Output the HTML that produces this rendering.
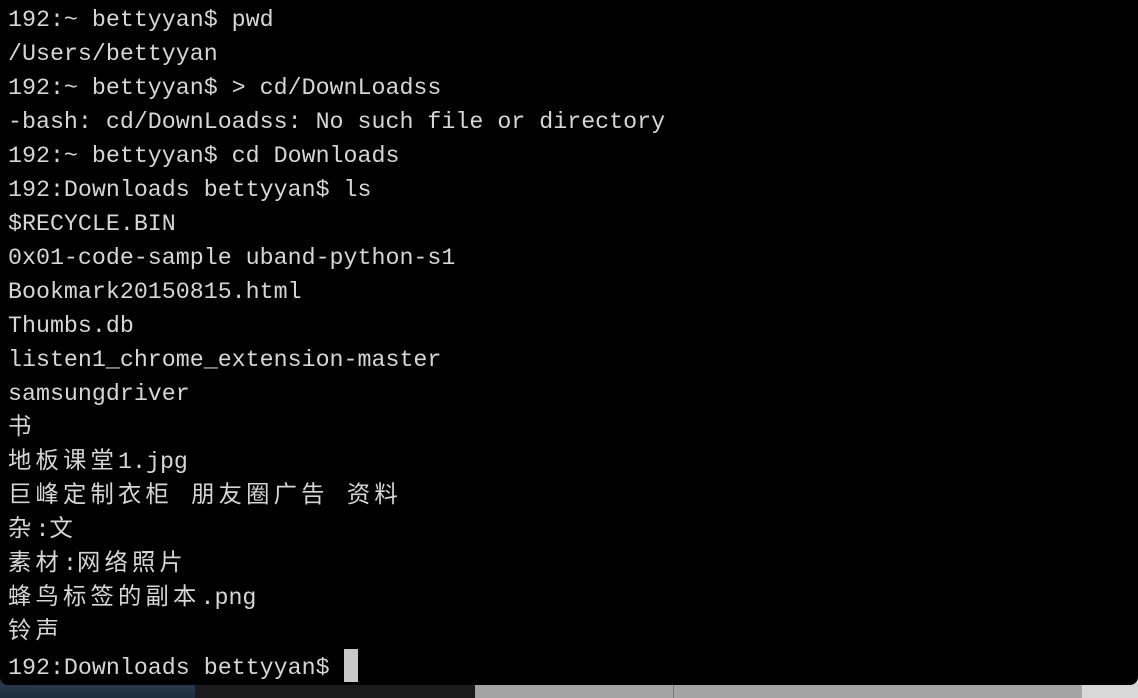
<!DOCTYPE html>
<html><head><meta charset="utf-8"><style>
html,body{margin:0;padding:0;width:1138px;height:698px;overflow:hidden;background:#9a9a9a;}
.bg{position:absolute;left:0;top:660px;height:38px;}
.win{position:absolute;left:0;top:0;width:1138px;height:685px;background:#000;border-radius:0 0 8px 8px;}
pre{margin:0;padding:3px 0 0 8px;font-family:"Liberation Mono","Noto Sans CJK SC",monospace;font-size:23.3px;line-height:34px;color:#d6d6d6;}
.c{letter-spacing:4.2px;}
.cur{display:inline-block;width:14px;height:33px;background:#c8c8c8;vertical-align:-8px;}
</style></head><body>
<div class="bg" style="width:195px;background:linear-gradient(#3a4a60,#1f2d40);"></div>
<div class="bg" style="left:195px;width:280px;background:#1b1b1b;"></div>
<div class="bg" style="left:475px;width:663px;background:#a4a4a4;"></div>
<div class="bg" style="left:673px;width:1px;background:#777;"></div>
<div class="bg" style="left:1082px;width:56px;background:#d8d8d8;"></div>
<div class="win"><pre>192:~ bettyyan$ pwd
/Users/bettyyan
192:~ bettyyan$ &gt; cd/DownLoadss
-bash: cd/DownLoadss: No such file or directory
192:~ bettyyan$ cd Downloads
192:Downloads bettyyan$ ls
$RECYCLE.BIN
0x01-code-sample uband-python-s1
Bookmark20150815.html
Thumbs.db
listen1_chrome_extension-master
samsungdriver
<span class="c">书</span>
<span class="c">地板课堂</span>1.jpg
<span class="c">巨峰定制衣柜 朋友圈广告 资料</span>
<span class="c">杂</span>:<span class="c">文</span>
<span class="c">素材</span>:<span class="c">网络照片</span>
<span class="c">蜂鸟标签的副本</span>.png
<span class="c">铃声</span>
192:Downloads bettyyan$ <span class="cur"></span></pre></div>
</body></html>
